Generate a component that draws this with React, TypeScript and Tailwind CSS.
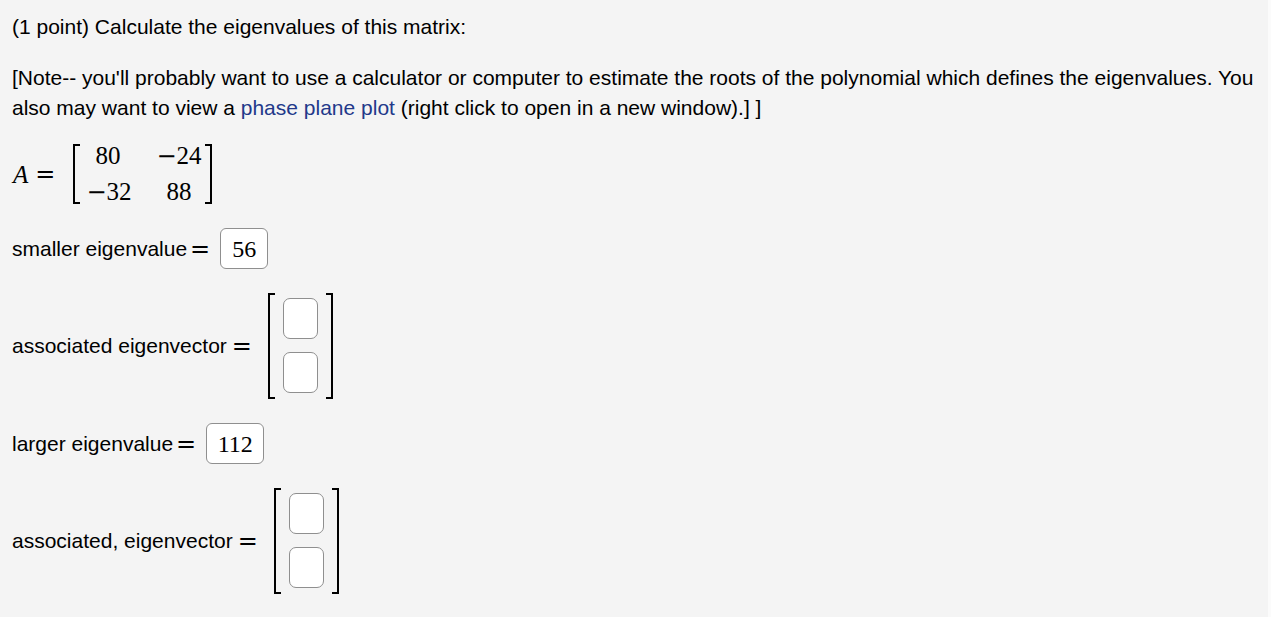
import React from "react";

const serif = { fontFamily: '"Liberation Serif", "Times New Roman", serif' };
const eqFont = { fontFamily: '"DejaVu Serif", serif' };

function Bracket({ side, h }: { side: "l" | "r"; h: number }) {
  return (
    <div
      className={
        side === "l"
          ? "w-[7px] border-l-[2px] border-t-[2px] border-b-[2px] border-black"
          : "w-[7px] border-r-[2px] border-t-[2px] border-b-[2px] border-black"
      }
      style={{ height: h }}
    />
  );
}

function Eq() {
  return (
    <span className="text-[24px] leading-none" style={eqFont}>
      =
    </span>
  );
}

function AnswerBox({ value, w }: { value: string; w: number }) {
  return (
    <div
      className="h-[41px] bg-white border border-[#8f8f8f] rounded-[6px] flex items-center justify-center text-[24px] text-black"
      style={{ ...serif, width: w }}
    >
      {value}
    </div>
  );
}

function VecBox() {
  return <div className="w-[35px] h-[41px] bg-white border border-[#8f8f8f] rounded-[7px]" />;
}

function VecMatrix() {
  return (
    <div className="flex items-stretch">
      <Bracket side="l" h={106} />
      <div className="flex flex-col gap-[13px] py-[5px] px-[8px]">
        <VecBox />
        <VecBox />
      </div>
      <Bracket side="r" h={106} />
    </div>
  );
}

function Neg({ n }: { n: string }) {
  return (
    <span className="whitespace-nowrap">
      <span className="text-[24px]" style={eqFont}>−</span>
      {n}
    </span>
  );
}

export default function App() {
  return (
    <div
      className="w-[1271px] h-[617px] bg-[#f4f4f4] text-black overflow-hidden relative"
      style={{ fontFamily: '"Liberation Sans", Arial, sans-serif' }}
    >
      <div className="absolute right-0 top-0 w-[3px] h-full bg-[#fbfbfb]" />
      <div className="pl-[12px] pt-[12px] text-[21px] leading-[30px]">
        <p className="whitespace-nowrap">(1 point) Calculate the eigenvalues of this matrix:</p>
        <p className="mt-[21px] whitespace-nowrap">
          [Note-- you'll probably want to use a calculator or computer to estimate the roots of the polynomial which defines the eigenvalues. You
          <br />
          also may want to view a <span className="text-[#22398a]">phase plane plot</span> (right click to open in a new window).] ]
        </p>

        {/* Matrix A */}
        <div className="mt-[21px] flex items-center h-[60px]" style={serif}>
          <span className="text-[25px] italic leading-none pl-[1px]">A</span>
          <span className="text-[24px] leading-none pl-[7px] pr-[18px]" style={eqFont}>=</span>
          <Bracket side="l" h={60} />
          <div className="grid grid-cols-[43px_45px] gap-x-[27px] text-[25px] leading-[35px] pl-[6px] pr-[4px] -mt-[1px]">
            <span className="text-center">80</span>
            <span className="text-center"><Neg n="24" /></span>
            <span className="text-center"><Neg n="32" /></span>
            <span className="text-center">88</span>
          </div>
          <Bracket side="r" h={60} />
        </div>

        {/* smaller eigenvalue */}
        <div className="mt-[24px] flex items-center h-[41px]">
          <span className="pr-[3px]">smaller eigenvalue</span>
          <Eq />
          <span className="w-[10px]" />
          <AnswerBox value="56" w={48} />
        </div>

        {/* eigenvector 1 */}
        <div className="mt-[24px] flex items-center">
          <span className="pr-[5px]">associated eigenvector</span>
          <Eq />
          <span className="w-[16px]" />
          <VecMatrix />
        </div>

        {/* larger eigenvalue */}
        <div className="mt-[24px] flex items-center h-[41px]">
          <span className="pr-[3px]">larger eigenvalue</span>
          <Eq />
          <span className="w-[10px]" />
          <AnswerBox value="112" w={58} />
        </div>

        {/* eigenvector 2 */}
        <div className="mt-[24px] flex items-center">
          <span className="pr-[5px]">associated, eigenvector</span>
          <Eq />
          <span className="w-[16px]" />
          <VecMatrix />
        </div>
      </div>
    </div>
  );
}
